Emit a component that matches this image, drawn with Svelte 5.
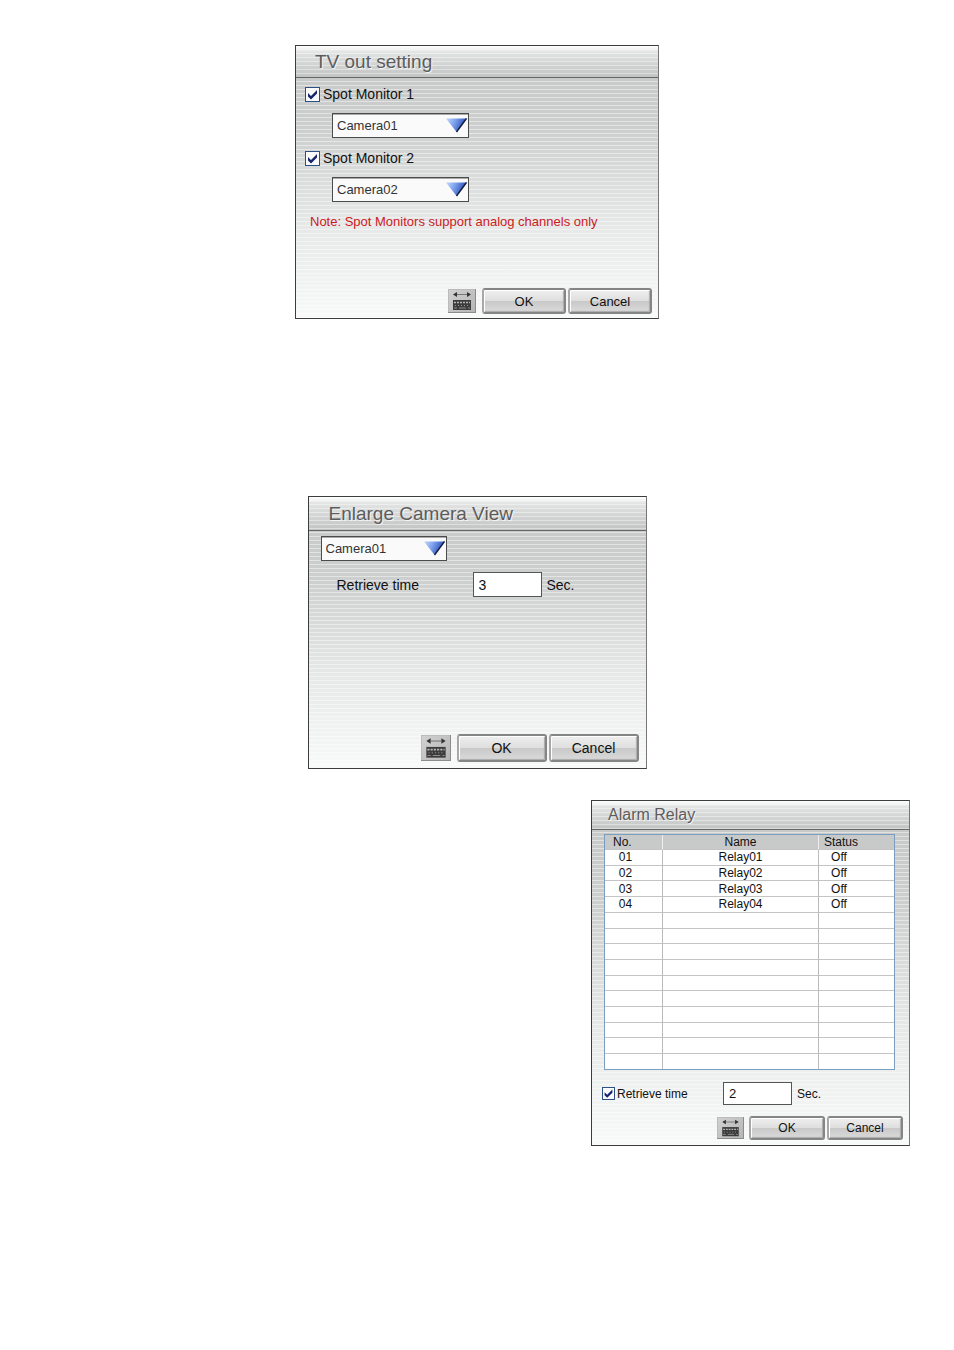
<script>
    let spot1 = $state(true);
    let spot2 = $state(true);
    let camera1 = $state('Camera01');
    let camera2 = $state('Camera02');
    let enlargeCamera = $state('Camera01');
    let enlargeTime = $state('3');
    let relayTimeOn = $state(true);
    let relayTime = $state('2');

    const cameras = ['Camera01', 'Camera02', 'Camera03', 'Camera04'];
    const relays = [
        { no: '01', name: 'Relay01', status: 'Off' },
        { no: '02', name: 'Relay02', status: 'Off' },
        { no: '03', name: 'Relay03', status: 'Off' },
        { no: '04', name: 'Relay04', status: 'Off' }
    ];
    // the list always shows 14 rows, filled or not
    const emptyRows = Array(14 - relays.length).fill(null);
</script>

{#snippet tick()}
    <svg class="tick" viewBox="0 0 15 15" aria-hidden="true">
        <path d="M3 6 L6 9 L12 3 V6.500 L6 12.500 L3 9.500 Z" fill="#15256f" />
    </svg>
{/snippet}

{#snippet arrow(id)}
    <svg class="arrow" viewBox="0 0 21 15" aria-hidden="true">
        <defs>
            <linearGradient id={id} x1="0" y1="0" x2="1" y2="0.3">
                <stop offset="0" stop-color="#c3d8fb" />
                <stop offset="0.45" stop-color="#7fa3ee" />
                <stop offset="1" stop-color="#2348b4" />
            </linearGradient>
        </defs>
        <path d="M0 0.500 H20.500 L10.500 14 Z" fill="url(#{id})" />
        <path d="M20.500 0.500 L10.500 14" stroke="#101a3c" stroke-width="1.400" />
    </svg>
{/snippet}

{#snippet actions()}
    <div class="actions">
        <button class="keyboard" type="button" aria-label="Keyboard">
            <svg viewBox="0 0 28 24" aria-hidden="true">
                <path d="M9 5.500 H19" stroke="#777" stroke-width="1" />
                <path d="M5 5.500 L9 3 V8 Z M23 5.500 L19 3 V8 Z" fill="#333" />
                <rect x="5" y="11" width="18" height="10" fill="#3c3c3c" />
                <path d="M6 13.500 H22" stroke="#b5b5b5" stroke-width="1.500" stroke-dasharray="2 1" />
                <path d="M7 16.500 H22" stroke="#969696" stroke-width="1" stroke-dasharray="1 2" />
                <path d="M6 19 H9 M11 19 H18 M20 19 H22" stroke="#8c8c8c" stroke-width="1" />
            </svg>
        </button>
        <button class="btn" type="button">OK</button>
        <button class="btn" type="button">Cancel</button>
    </div>
{/snippet}

<main>
    <section class="dialog tv">
        <h2>TV out setting</h2>
        <div class="body">
            <label class="check"><span class="box"><input type="checkbox" bind:checked={spot1} />{#if spot1}{@render tick()}{/if}</span>Spot Monitor 1</label>
            <div class="select">
                <select bind:value={camera1} aria-label="Spot Monitor 1 camera">
                    {#each cameras as camera}<option>{camera}</option>{/each}
                </select>
                {@render arrow('arrow-spot1')}
            </div>
            <label class="check"><span class="box"><input type="checkbox" bind:checked={spot2} />{#if spot2}{@render tick()}{/if}</span>Spot Monitor 2</label>
            <div class="select">
                <select bind:value={camera2} aria-label="Spot Monitor 2 camera">
                    {#each cameras as camera}<option>{camera}</option>{/each}
                </select>
                {@render arrow('arrow-spot2')}
            </div>
            <p class="note">Note: Spot Monitors support analog channels only</p>
            {@render actions()}
        </div>
    </section>

    <section class="dialog enlarge">
        <h2>Enlarge Camera View</h2>
        <div class="body">
            <div class="select">
                <select bind:value={enlargeCamera} aria-label="Camera">
                    {#each cameras as camera}<option>{camera}</option>{/each}
                </select>
                {@render arrow('arrow-enlarge')}
            </div>
            <div class="time">
                <label for="enlarge-time">Retrieve time</label>
                <input id="enlarge-time" type="text" bind:value={enlargeTime} />
                <span>Sec.</span>
            </div>
            {@render actions()}
        </div>
    </section>

    <section class="dialog relay">
        <h2>Alarm Relay</h2>
        <div class="body">
            <table>
                <thead>
                    <tr><th class="no">No.</th><th>Name</th><th class="status">Status</th></tr>
                </thead>
                <tbody>
                    {#each relays as relay}
                        <tr><td class="no">{relay.no}</td><td>{relay.name}</td><td class="status">{relay.status}</td></tr>
                    {/each}
                    {#each emptyRows as _}
                        <tr><td>&nbsp;</td><td></td><td></td></tr>
                    {/each}
                </tbody>
            </table>
            <div class="time">
                <label class="check"><span class="box"><input type="checkbox" bind:checked={relayTimeOn} />{#if relayTimeOn}{@render tick()}{/if}</span>Retrieve time</label>
                <input type="text" aria-label="Retrieve time in seconds" bind:value={relayTime} />
                <span>Sec.</span>
            </div>
            {@render actions()}
        </div>
    </section>
</main>

<style>
    :global(body) {
        margin: 0;
        background: #fff;
    }

    main {
        display: flex;
        flex-direction: column;
        align-items: center;
        padding: 45px 44px 200px;
        font-family: "Liberation Sans", Arial, sans-serif;
        font-size: 14px;
        color: #111;
    }

    .dialog {
        box-sizing: border-box;
        display: flex;
        flex-direction: column;
        max-width: 100%;
        border: 1px solid #3c3c3c;
        border-right-color: #777;
        background:
            repeating-linear-gradient(rgba(255, 255, 255, 0) 0 3px, rgba(255, 255, 255, 0.45) 3px 4px),
            linear-gradient(#c6c7c7, #cdcece 30%, #e6e7e7 65%, #f8f9f9);
    }

    h2 {
        margin: 0;
        border-bottom: 1px solid #666;
        background:
            repeating-linear-gradient(rgba(255, 255, 255, 0) 0 3px, rgba(255, 255, 255, 0.4) 3px 4px),
            linear-gradient(#fff, #e2e3e3 20%, #c2c3c3);
        font-size: 19px;
        font-weight: 400;
        line-height: 31px;
        padding-left: 19px;
        color: #5c5c5c;
        text-shadow: 1px 1px 0 #f4f4f4;
    }

    .body {
        display: flex;
        flex-direction: column;
        flex: 1;
    }

    .check {
        display: flex;
        align-items: center;
        gap: 3px;
        line-height: 16px;
    }
    .box {
        position: relative;
        width: 15px;
        height: 15px;
        flex: none;
    }
    .box input {
        appearance: none;
        box-sizing: border-box;
        display: block;
        width: 100%;
        height: 100%;
        margin: 0;
        border: 1px solid #2d5084;
        background: #fafafa;
    }
    .tick {
        position: absolute;
        inset: 0;
        width: 100%;
        height: 100%;
        pointer-events: none;
    }

    .select {
        position: relative;
        width: 137px;
        height: 25px;
    }
    select {
        appearance: none;
        box-sizing: border-box;
        display: block;
        width: 100%;
        height: 100%;
        padding: 0 26px 0 4px;
        border: 1px solid #4b4b4b;
        border-radius: 0;
        box-shadow: inset 0 1px 0 #aaa;
        background: #fafafa;
        font: inherit;
        font-size: 13px;
        color: #333;
    }
    .arrow {
        position: absolute;
        top: 5px;
        right: 2px;
        width: 21px;
        height: 15px;
        pointer-events: none;
    }

    .note {
        margin: 0 5px;
        font-size: 13px;
        line-height: 16px;
        color: #cc1a22;
    }

    .time {
        display: flex;
        align-items: center;
    }
    .time > input {
        box-sizing: border-box;
        width: 69px;
        height: 25px;
        margin: 0 5px 0 0;
        padding: 0 5px;
        border: 1px solid #555;
        background: #fff;
        font: inherit;
        color: #111;
    }

    .actions {
        display: flex;
        align-items: center;
        justify-content: flex-end;
        gap: 2px;
        margin-top: auto;
    }
    .keyboard {
        width: 28px;
        height: 24px;
        margin: 0 4px 0 0;
        padding: 0;
        border: 0;
        background: linear-gradient(135deg, #d2d2d2, #b4b4b4);
        box-shadow: inset -1px -1px 0 #8c8c8c, inset 1px 1px 0 #bbb;
    }
    .keyboard svg {
        display: block;
        width: 100%;
        height: 100%;
    }
    .btn {
        box-sizing: border-box;
        width: 84px;
        height: 26px;
        padding: 0;
        border: 2px solid #858585;
        border-left-color: #a8a8a8;
        border-radius: 3px;
        background: linear-gradient(#efefef, #dedede 50%, #c9c9c9 52%, #dadada);
        box-shadow: inset 1px 1px 0 #fff, inset -1px -1px 1px #aaa;
        font: inherit;
        font-size: 13px;
        color: #111;
    }

    .tv {
        width: 364px;
        min-height: 274px;
    }
    .tv .body {
        padding: 8px 6px 4px 9px;
    }
    .tv .select {
        margin: 11px 0 12px 27px;
    }

    .enlarge {
        width: 339px;
        min-height: 273px;
        margin-top: 177px;
    }
    .enlarge h2 {
        padding-left: 20px;
        line-height: 33px;
    }
    .enlarge .body {
        padding: 5px 7px 6px 12px;
    }
    .enlarge .select {
        width: 126px;
    }
    .enlarge .time {
        margin: 11px 0 0 16px;
    }
    .enlarge .time label {
        width: 136px;
    }
    .enlarge .keyboard {
        width: 30px;
        height: 26px;
    }
    .enlarge .btn {
        width: 90px;
        height: 28px;
        font-size: 14px;
    }

    .relay {
        align-self: flex-end;
        width: 319px;
        min-height: 346px;
        margin-top: 31px;
        font-size: 12px;
    }
    .relay h2 {
        padding-left: 16px;
        font-size: 16px;
        line-height: 28px;
    }
    .relay .body {
        padding: 4px 6px 5px 10px;
    }
    .relay .check {
        width: 121px;
        gap: 2px;
    }
    .relay .box {
        width: 13px;
        height: 13px;
    }
    .relay .time {
        margin-top: 12px;
    }
    .relay .time > input {
        height: 23px;
        font-size: 13px;
    }
    .relay .btn {
        width: 76px;
        height: 24px;
        font-size: 12px;
    }
    .relay .keyboard {
        width: 27px;
        height: 22px;
        margin-right: 3px;
    }

    table {
        box-sizing: border-box;
        width: 291px;
        height: 236px;
        margin-left: 2px;
        border: 1px solid #7b9dc0;
        border-spacing: 0;
        table-layout: fixed;
        background: #fff;
        line-height: 14px;
    }
    th,
    td {
        padding: 0;
        border-right: 1px solid #bbb;
        border-bottom: 1px solid #c4c4c4;
        font-weight: 400;
        text-align: center;
    }
    th {
        border-right-color: #eee;
        background: #c8c9c9;
    }
    th:last-child,
    td:last-child {
        border-right: 0;
    }
    tr:last-child td {
        border-bottom: 0;
    }
    .no {
        width: 58px;
    }
    .status {
        width: 75px;
    }
    th.no,
    th.status {
        box-sizing: border-box;
        text-align: left;
    }
    th.no {
        padding-left: 8px;
    }
    th.status {
        padding-left: 5px;
    }
    td.no {
        padding-right: 16px;
    }
    td.status {
        padding-right: 35px;
    }
</style>
